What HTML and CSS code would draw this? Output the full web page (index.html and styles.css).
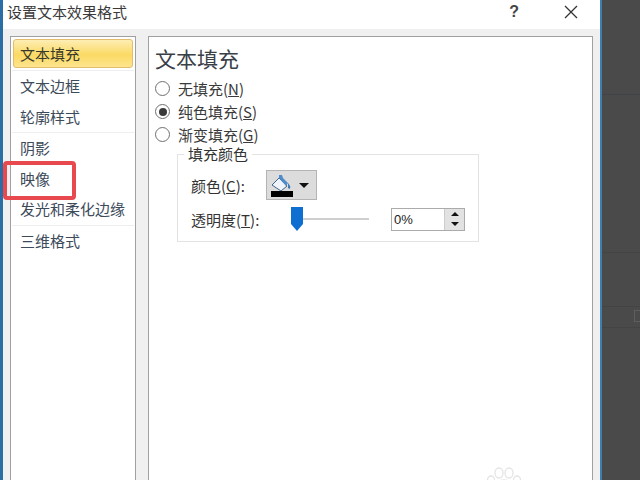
FILE: index.html
```html
<!DOCTYPE html>
<html lang="zh">
<head>
<meta charset="utf-8">
<title>设置文本效果格式</title>
<link rel="stylesheet" href="styles.css">
</head>
<body>
<div class="screen">
  <div class="dialog">
    <header class="titlebar">
      <span class="title">设置文本效果格式</span>
      <span class="help">?</span>
      <svg class="close" width="14" height="14" viewBox="0 0 14 14"><path d="M1 1 13 13M13 1 1 13" stroke="#333" stroke-width="1.3" fill="none"/></svg>
    </header>
    <div class="content">
      <nav class="nav">
        <div class="nav-item selected">文本填充</div>
        <div class="nav-group">
          <div class="nav-item">文本边框</div>
          <div class="nav-item">轮廓样式</div>
        </div>
        <div class="nav-group">
          <div class="nav-item">阴影</div>
          <div class="nav-item">映像</div>
          <div class="nav-item">发光和柔化边缘</div>
        </div>
        <div class="nav-group">
          <div class="nav-item">三维格式</div>
        </div>
        <div class="highlight"></div>
      </nav>
      <main class="panel">
        <h1 class="heading">文本填充</h1>
        <div class="radios">
          <div class="radio-row"><span class="radio"></span><span>无填充(<u>N</u>)</span></div>
          <div class="radio-row"><span class="radio checked"></span><span>纯色填充(<u>S</u>)</span></div>
          <div class="radio-row"><span class="radio"></span><span>渐变填充(<u>G</u>)</span></div>
        </div>
        <section class="group">
          <span class="legend">填充颜色</span>
          <div class="field color-field">
            <span class="label">颜色(<u>C</u>):</span>
            <span class="color-btn">
              <svg width="24" height="23" viewBox="0 0 24 23">
                <path d="M2 11 9 4l8 8-6 5z" fill="#eef4fa" stroke="#41658c" stroke-width="1"/>
                <path d="M9 4V1h3l1 3 5 5-2 3z" fill="#4f8ccb"/>
                <path d="M18 9c2.200 2.500 2.800 4.500 2 5.500-1 .7-2.200-.2-2-1.500z" fill="#3f78b8"/>
                <rect x="1" y="17" width="22" height="6" fill="#000"/>
              </svg>
              <span class="caret"></span>
            </span>
          </div>
          <div class="field slider-field">
            <span class="label">透明度(<u>T</u>):</span>
            <span class="slider">
              <svg class="thumb" width="14" height="24" viewBox="0 0 14 24"><path d="M1 0h12v17l-6 7-6-7z" fill="#0f6fd0"/></svg>
              <span class="track"></span>
            </span>
            <span class="spin">
              <span class="spin-value">0%</span>
              <span class="spin-btns"><span class="up"></span><span class="down"></span></span>
            </span>
          </div>
        </section>
        <svg class="paw" width="40" height="18" viewBox="0 0 40 18">
          <g fill="none" stroke="#e4e4e4" stroke-width="1.3">
            <ellipse cx="14" cy="6" rx="4" ry="5"/><ellipse cx="24" cy="6" rx="4" ry="5"/>
            <ellipse cx="6" cy="13" rx="3.5" ry="4"/><ellipse cx="32" cy="13" rx="3.5" ry="4"/>
            <ellipse cx="19" cy="18" rx="8" ry="5"/>
          </g>
        </svg>
      </main>
    </div>
  </div>
  <aside class="backdrop">
    <div class="bar-a"></div>
    <div class="bar-b"></div>
    <div class="bar-c"><span class="mini"></span></div>
  </aside>
</div>
</body>
</html>
```
FILE: styles.css
```css
* { box-sizing: border-box; }
html, body { margin: 0; padding: 0; }
body {
  width: 640px; height: 480px; overflow: hidden;
  font-family: "Noto Sans CJK SC", "Liberation Sans", sans-serif;
  color: #333; font-size: 15px;
}
u { text-underline-offset: 1px; }
.screen { display: flex; width: 640px; height: 480px; }
.dialog {
  width: 602px; height: 480px; display: flex; flex-direction: column;
  background: #f0f0f0;
  border-left: 3px solid #2a6ea5; border-right: 2px solid #3f7fae;
}
.titlebar {
  height: 29px; background: #fff; display: flex; align-items: center;
  flex: none; padding: 0 22px 5px 4px;
}
.title { flex: 1; font-size: 15px; line-height: 20px; color: #3a3a3a; }
.help { font: bold 16px "Liberation Sans", sans-serif; color: #444; margin-right: 45px; margin-left: -4px; }
.close { display: block; }
.content { flex: 1; display: flex; gap: 12px; padding: 7px 0 0 7px; min-height: 0; }
.nav {
  position: relative; width: 126px; background: #fff; flex: none;
  border: 1px solid #a0a0a0; border-bottom: 0; padding: 2px 1px;
}
.nav-item { height: 30.5px; line-height: 30px; padding-left: 8px; font-size: 15px; color: #3c4a5a; }
.nav-group { border-top: 1px solid #eee; }
.nav-group:first-of-type { border-top: 0; }
.nav-item.selected {
  height: 29px; line-height: 27px; color: #3a3a2a; margin: 0 1px 2px 1px;
  border: 1px solid #e3bd6c; border-radius: 3px;
  background: linear-gradient(#fdeeb4, #fbd964 55%, #fde58e);
  padding-left: 6px;
}
.nav-group:last-of-type { margin-top: 1px; }
.highlight {
  position: absolute; left: -8px; top: 124px; width: 73px; height: 39px;
  border: 4px solid #e8494e; border-radius: 4px;
}
.panel {
  position: relative; width: 445px; background: #fff; flex: none;
  border: 1px solid #a0a0a0; border-bottom: 0; padding: 6px 7px 0 7px;
}
.heading { margin: 0 0 0 -1px; font-size: 21px; font-weight: 400; line-height: 30px; color: #3a4048; }
.radios { margin-top: 4px; }
.radio-row { display: flex; align-items: center; gap: 8px; height: 23px; font-size: 15px; color: #3a3a3a; }
.radio {
  width: 15px; height: 15px; border-radius: 50%; border: 1px solid #707070; margin-left: -1px;
  background: #fff; flex: none; display: flex; align-items: center; justify-content: center;
}
.radio.checked::after { content: ""; width: 8px; height: 8px; border-radius: 50%; background: #3a3a3a; }
.group {
  position: relative; margin: 8px 0 0 21px; width: 302px; height: 88px;
  border: 1px solid #e3e3e3; padding: 15px 0 0 13px;
}
.legend {
  position: absolute; left: 6px; top: -11px; background: #fff; padding: 0 4px;
  font-size: 15px; line-height: 20px; color: #333;
}
.field { display: flex; align-items: center; font-size: 15px; color: #333; }
.label { flex: none; }
.color-field { height: 30px; }
.color-field .label { width: 75px; }
.color-btn {
  width: 51px; height: 30px; background: #dcdcdc;
  border: 1px solid #b4b4b4; display: flex; align-items: center; padding-left: 3px; gap: 5px;
}
.caret { width: 0; height: 0; border: 5px solid transparent; border-top: 5px solid #111; border-bottom: 0; }
.slider-field { height: 24px; margin-top: 7px; }
.slider-field .label { width: 99px; }
.slider { display: flex; align-items: center; }
.thumb { display: block; }
.track { width: 66px; height: 2px; background: #cfcfcf; margin-left: -1px; }
.spin {
  width: 74px; height: 23px; margin-left: 22px; border: 1px solid #ababab; display: flex;
  justify-content: space-between; background: #fff;
}
.spin-value { font: 13px/21px "Liberation Sans", sans-serif; padding-left: 2px; color: #222; }
.spin-btns { width: 20px; display: flex; flex-direction: column; background: #e2e2e2; border-left: 1px solid #ccc; }
.up, .down { flex: 1; display: flex; align-items: center; justify-content: center; }
.up::after { content: ""; border: 4px solid transparent; border-bottom: 4px solid #111; border-top: 0; }
.down::after { content: ""; border: 4px solid transparent; border-top: 4px solid #111; border-bottom: 0; }
.paw { position: absolute; right: 67px; bottom: -5px; }
.backdrop { flex: 1; background: #4a4a4a; padding-top: 94px; }
.bar-a { height: 159px; border-top: 1px solid #3f444a; border-bottom: 1px solid #444; }
.bar-b { height: 54px; border-bottom: 1px solid #444; }
.bar-c { height: 21px; border-bottom: 1px solid #444; position: relative; }
.mini { position: absolute; right: 0; top: 3px; width: 6px; height: 12px; border: 1px solid #5e5e5e; border-right: 0; }
```
